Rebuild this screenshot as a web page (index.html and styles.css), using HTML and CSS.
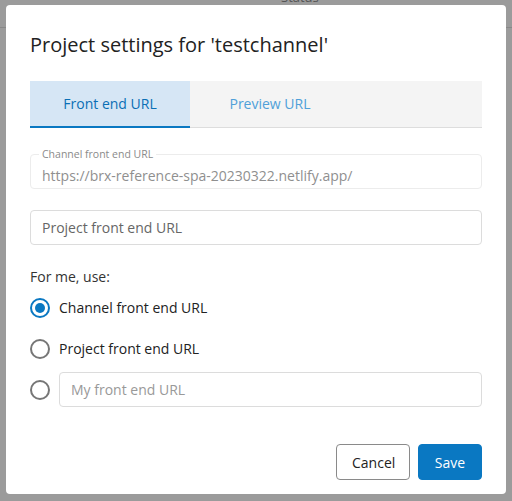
FILE: index.html
```html
<!DOCTYPE html>
<html>
<head>
<meta charset="utf-8">
<link rel="stylesheet" href="styles.css">
</head>
<body>
<div class="backdrop">
  <div class="page-header"><span class="status">Status</span></div>
  <div class="dialog">
    <h1 class="title">Project settings for 'testchannel'</h1>
    <div class="tabs">
      <div class="tab active">Front end URL</div>
      <div class="tab">Preview URL</div>
      <div class="tab-fill"></div>
    </div>
    <div class="outlined">
      <span class="float-label">Channel front end URL</span>
      <span class="value">https://brx-reference-spa-20230322.netlify.app/</span>
    </div>
    <div class="input"><span class="ph dark">Project front end URL</span></div>
    <div class="for-me">For me, use:</div>
    <div class="radio-row">
      <span class="radio checked"></span><span class="rlabel">Channel front end URL</span>
    </div>
    <div class="radio-row">
      <span class="radio"></span><span class="rlabel">Project front end URL</span>
    </div>
    <div class="radio-row">
      <span class="radio"></span>
      <div class="input inline"><span class="ph">My front end URL</span></div>
    </div>
    <div class="actions">
      <button class="btn cancel">Cancel</button>
      <button class="btn save">Save</button>
    </div>
  </div>
</div>
</body>
</html>
```
FILE: styles.css
```css
html, body {
  margin: 0;
  padding: 0;
  width: 512px;
  height: 501px;
  overflow: hidden;
  font-family: "Open Sans", "Noto Sans", sans-serif;
}
.backdrop {
  position: relative;
  width: 512px;
  height: 501px;
  background: #9b9b9b;
  overflow: hidden;
}
.page-header {
  position: absolute;
  left: 0;
  top: 0;
  width: 512px;
  height: 27px;
  border-bottom: 1px solid #888;
}
.status {
  position: absolute;
  left: 281px;
  top: -12px;
  font-size: 13px;
  color: #555;
}
.dialog {
  position: absolute;
  left: 6px;
  top: 5px;
  width: 500px;
  height: 489px;
  background: #fff;
  border-radius: 4px;
  box-sizing: border-box;
  padding: 0 24px;
}
.title {
  margin: 0;
  padding-top: 26px;
  font-size: 20px;
  font-weight: 400;
  color: #222;
  line-height: 28px;
  height: 50px;
}
.tabs {
  display: flex;
  height: 47px;
}
.tab {
  width: 160px;
  box-sizing: border-box;
  background: #f4f4f4;
  border-bottom: 1px solid #ddd;
  color: #4fa0d9;
  font-size: 14px;
  display: flex;
  align-items: center;
  justify-content: center;
  padding-bottom: 2px;
}
.tab.active {
  background: #d6e6f5;
  border-bottom: 2px solid #0a78c2;
  color: #0a6fb5;
  padding-bottom: 1px;
}
.tab-fill {
  flex: 1;
  background: #f4f4f4;
  border-bottom: 1px solid #ddd;
}
.outlined {
  position: relative;
  margin-top: 26px;
  height: 35px;
  border: 1px solid #ececec;
  border-radius: 4px;
  box-sizing: border-box;
  display: flex;
  align-items: center;
  padding: 7px 11px 0;
}
.float-label {
  position: absolute;
  left: 8px;
  top: -7px;
  background: #fff;
  padding: 0 3px;
  font-size: 10.5px;
  line-height: 13px;
  color: #8a8a8a;
}
.value {
  font-size: 14px;
  color: #8f8f8f;
}
.input {
  margin-top: 21px;
  height: 35px;
  border: 1px solid #dcdcdc;
  border-radius: 4px;
  box-sizing: border-box;
  display: flex;
  align-items: center;
  padding: 0 11px;
}
.ph {
  font-size: 14px;
  color: #999;
}
.ph.dark {
  color: #666;
}
.for-me {
  margin-top: 22px;
  font-size: 14px;
  color: #333;
  line-height: 20px;
}
.radio-row {
  display: flex;
  align-items: center;
  height: 35px;
  margin-top: 6px;
}
.for-me + .radio-row {
  margin-top: 3px;
}
.radio {
  width: 20px;
  height: 20px;
  box-sizing: border-box;
  border: 2px solid #767676;
  border-radius: 50%;
  flex: none;
  position: relative;
}
.radio.checked {
  border-color: #0a78c2;
}
.radio.checked::after {
  content: "";
  position: absolute;
  left: 3px;
  top: 3px;
  width: 10px;
  height: 10px;
  border-radius: 50%;
  background: #0a78c2;
}
.rlabel {
  margin-left: 9px;
  font-size: 14px;
  color: #222;
}
.input.inline {
  margin: 0 0 0 9px;
  flex: 1;
}
.actions {
  display: flex;
  justify-content: flex-end;
  gap: 8px;
  margin-top: 37px;
}
.btn {
  height: 36px;
  font-family: inherit;
  font-size: 14px;
  border-radius: 4px;
  box-sizing: border-box;
  padding: 0 15px;
}
.cancel {
  background: #fff;
  border: 1px solid #8a8a8a;
  color: #222;
  width: 74px;
}
.save {
  background: #0a78c2;
  border: 1px solid #0a78c2;
  color: #fff;
  width: 64px;
}
```
